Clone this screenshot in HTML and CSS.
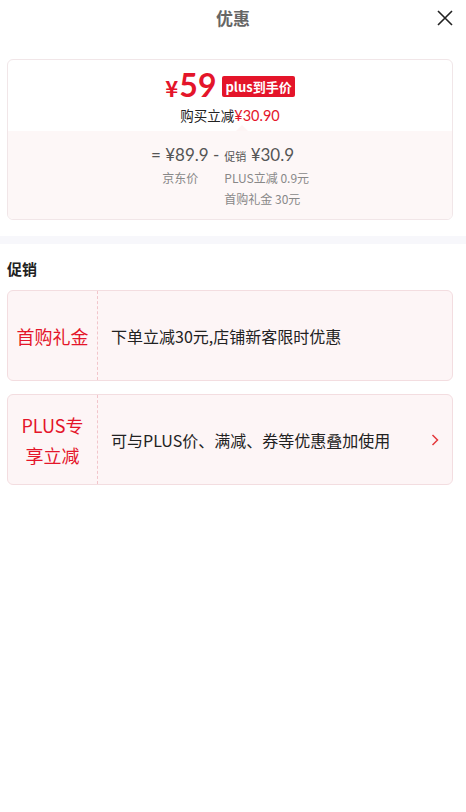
FILE: index.html
```html
<!DOCTYPE html>
<html lang="zh-CN">
<head>
    <meta charset="UTF-8">
    <title>优惠</title>
    <link rel="stylesheet" href="styles.css">
</head>
<body>
    <div class="header">
        <span class="title">优惠</span>
        <span class="close">
            <svg width="16" height="16" viewBox="0 0 16 16"><path d="M1 1 L15 15 M15 1 L1 15" stroke="#222" stroke-width="1.6" fill="none"/></svg>
        </span>
    </div>

    <div class="price-card">
        <div class="price-top">
            <div class="final">
                <span class="yen">¥</span><span class="num">59</span>
                <span class="badge">plus到手价</span>
            </div>
            <div class="save">购买立减<span class="red">¥30.90</span></div>
        </div>
        <div class="price-detail">
            <div class="formula">
                <div class="col col-left">
                    <div class="big">= ¥89.9 -</div>
                    <div class="small">京东价</div>
                </div>
                <div class="col">
                    <div class="big"><span class="tiny">促销</span> ¥30.9</div>
                    <div class="small">PLUS立减 0.9元</div>
                    <div class="small">首购礼金 30元</div>
                </div>
            </div>
        </div>
    </div>

    <div class="band"></div>

    <div class="section-title">促销</div>

    <div class="promo">
        <div class="promo-tag">首购礼金</div>
        <div class="promo-text">下单立减30元,店铺新客限时优惠</div>
    </div>

    <div class="promo">
        <div class="promo-tag">PLUS专<br>享立减</div>
        <div class="promo-text">可与PLUS价、满减、券等优惠叠加使用</div>
        <div class="arrow">
            <svg width="8" height="12" viewBox="0 0 8 12"><path d="M1.5 1 L6.5 6 L1.5 11" stroke="#e4393c" stroke-width="1.5" fill="none"/></svg>
        </div>
    </div>
</body>
</html>
```

FILE: styles.css
```css
body {
    margin: 0;
    font-family: "Noto Sans CJK SC", "Noto Sans", sans-serif;
    background-color: #fff;
    color: #222;
}
.header {
    height: 34px;
    display: flex;
    justify-content: center;
    align-items: center;
    position: relative;
}
.title {
    font-size: 17px;
    font-weight: bold;
    color: #666;
}
.close {
    position: absolute;
    right: 13px;
    top: 10px;
    display: flex;
}
.price-card {
    margin: 25px 13px 0 7px;
    border: 1px solid #f1e6e8;
    border-radius: 6px;
    overflow: hidden;
}
.price-top {
    height: 71px;
    display: flex;
    flex-direction: column;
    align-items: center;
    padding-top: 8px;
    box-sizing: border-box;
}
.final {
    display: flex;
    align-items: center;
    color: #e4152a;
    height: 34px;
}
.yen {
    font-size: 22px;
    font-weight: bold;
    margin-top: 4px;
    margin-right: 1px;
}
.num {
    font-family: Lato, "Noto Sans", sans-serif;
    font-size: 32px;
    font-weight: bold;
    line-height: 34px;
}
.badge {
    margin-left: 6px;
    margin-top: 3px;
    background-color: #e4152a;
    color: #fff;
    font-size: 13px;
    font-weight: bold;
    padding: 0 3px;
    height: 21px;
    line-height: 21px;
    border-radius: 2px;
}
.save {
    font-size: 13.5px;
    color: #222;
    margin-top: 3px;
}
.red {
    color: #e4152a;
    font-family: Lato, "Noto Sans", sans-serif;
    font-size: 14.5px;
}
.price-detail {
    background-color: #fdf7f7;
    height: 88px;
    position: relative;
    padding-top: 12px;
    box-sizing: border-box;
}
.price-detail::before {
    content: "";
    position: absolute;
    top: -6px;
    left: 228px;
    border: 6px solid transparent;
    border-bottom-color: #fdf5f5;
    border-top: none;
}
.formula {
    display: flex;
    justify-content: center;
    gap: 5px;
    color: #555;
}
.col-left {
    text-align: right;
}
.big {
    font-family: Lato, "Noto Sans CJK SC", sans-serif;
    font-size: 17px;
    height: 24px;
    line-height: 24px;
}
.tiny {
    font-family: "Noto Sans CJK SC", sans-serif;
    font-size: 11px;
}
.small {
    font-size: 12px;
    color: #888;
    height: 21px;
    line-height: 21px;
}
.col-left .small {
    margin-right: 21px;
}
.band {
    height: 8px;
    background-color: #f7f7fb;
    margin-top: 16px;
}
.section-title {
    font-size: 15px;
    font-weight: bold;
    padding: 14px 7px 11px;
    color: #222;
}
.promo {
    margin: 0 13px 13px 7px;
    height: 91px;
    display: flex;
    align-items: center;
    background-color: #fdf5f6;
    border: 1px solid #f3dde0;
    border-radius: 6px;
    box-sizing: border-box;
}
.promo-tag {
    width: 89px;
    height: 100%;
    display: flex;
    align-items: center;
    justify-content: center;
    text-align: center;
    color: #e4152a;
    font-size: 18px;
    line-height: 30px;
    border-right: 1px dashed #f2c5cb;
    flex-shrink: 0;
}
.promo-text {
    flex: 1;
    padding-left: 13px;
    font-size: 16px;
    color: #222;
}
.arrow {
    display: flex;
    margin-right: 13px;
}
```
